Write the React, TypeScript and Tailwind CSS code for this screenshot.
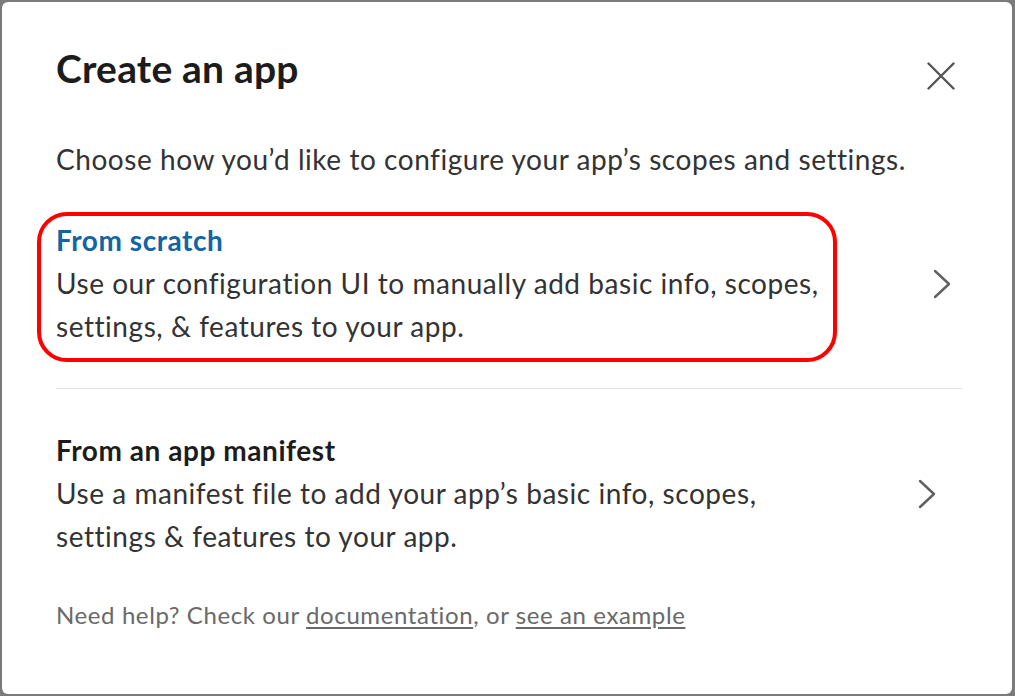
import React from "react";

const Chevron = ({ className }: { className?: string }) => (
  <svg width="20" height="30" viewBox="0 0 20 30" className={className} fill="none">
    <polyline points="3,2 17,15 3,28" stroke="#616061" strokeWidth="2.4" strokeLinecap="round" strokeLinejoin="round" />
  </svg>
);

const CloseIcon = () => (
  <svg width="28" height="28" viewBox="0 0 28 28" fill="none">
    <path d="M1.5 1.5 L26.5 26.5 M26.5 1.5 L1.5 26.5" stroke="#555555" strokeWidth="2.4" strokeLinecap="round" />
  </svg>
);

export default function App() {
  return (
    <div
      className="w-[1015px] h-[696px] bg-[#7b7b7b] pt-[2px] pl-[2px] pr-[3px] pb-[2px]"
      style={{ fontFamily: "Lato, 'Noto Sans', sans-serif" }}
    >
      <div className="h-full bg-white rounded-[6px] pl-[54px] pr-[50px] pt-[42px] text-[#1d1c1d]">
        {/* Header */}
        <div className="flex items-start justify-between">
          <h1 className="text-[39px] leading-[48px] font-bold tracking-[0.2px]">Create an app</h1>
          <button className="mt-[18px] mr-[7px]">
            <CloseIcon />
          </button>
        </div>

        <p className="mt-[47px] text-[28px] leading-[40px] tracking-[0.55px] text-[#333]">
          Choose how you’d like to configure your app’s scopes and settings.
        </p>

        {/* From scratch */}
        <div className="relative flex items-center justify-between py-[40px] border-b border-[#e4e4e4]">
          <div className="text-[28px] leading-[43px] tracking-[0.55px]">
            <div className="font-bold text-[#1264a3]">From scratch</div>
            <div className="text-[#333]">
              Use our configuration UI to manually add basic info, scopes,
              <br />
              settings, &amp; features to your app.
            </div>
          </div>
          <Chevron className="mr-[10px]" />
          <div className="absolute left-[-19px] top-[33px] w-[800px] h-[150px] border-[4px] border-[#ff0000] rounded-[30px] pointer-events-none" />
        </div>

        {/* From an app manifest */}
        <div className="flex items-center justify-between py-[40px]">
          <div className="text-[28px] leading-[43px] tracking-[0.55px]">
            <div className="font-bold">From an app manifest</div>
            <div className="text-[#333]">
              Use a manifest file to add your app’s basic info, scopes,
              <br />
              settings &amp; features to your app.
            </div>
          </div>
          <Chevron className="mr-[25px]" />
        </div>

        <p className="text-[24px] leading-[34px] tracking-[0.6px] text-[#696969]">
          Need help? Check our <a className="underline underline-offset-[3px]">documentation</a>, or{" "}
          <a className="underline underline-offset-[3px]">see an example</a>
        </p>
      </div>
    </div>
  );
}
